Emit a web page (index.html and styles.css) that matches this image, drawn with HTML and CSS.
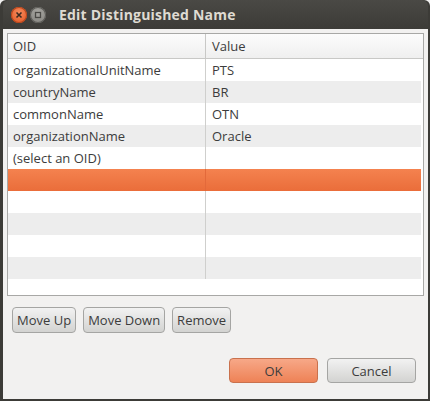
FILE: index.html
```html
<!DOCTYPE html>
<html lang="en">

<head>
    <meta charset="UTF-8">
    <meta name="viewport" content="width=device-width, initial-scale=1.0">
    <title>Edit Distinguished Name</title>
    <link rel="stylesheet" href="styles.css">
</head>

<body>
    <div class="window">
        <!-- Titelbalk -->
        <div class="titlebar">
            <span class="win-btn close" aria-label="Close">
                <svg width="8" height="8" viewBox="0 0 8 8">
                    <path d="M1.5 1.5 L6.5 6.5 M6.5 1.5 L1.5 6.5" stroke="#3c2a20" stroke-width="1.6" />
                </svg>
            </span>
            <span class="win-btn minimize" aria-label="Minimize">
                <svg width="8" height="8" viewBox="0 0 8 8">
                    <rect x="1.5" y="1.5" width="5" height="5" fill="none" stroke="#4a4945" stroke-width="1.3" />
                </svg>
            </span>
            <span class="title">Edit Distinguished Name</span>
        </div>

        <div class="content">
            <!-- Tabel met OID's -->
            <div class="table">
                <div class="row header">
                    <div class="cell">OID</div>
                    <div class="cell">Value</div>
                </div>
                <div class="row">
                    <div class="cell">organizationalUnitName</div>
                    <div class="cell">PTS</div>
                </div>
                <div class="row odd">
                    <div class="cell">countryName</div>
                    <div class="cell">BR</div>
                </div>
                <div class="row">
                    <div class="cell">commonName</div>
                    <div class="cell">OTN</div>
                </div>
                <div class="row odd">
                    <div class="cell">organizationName</div>
                    <div class="cell">Oracle</div>
                </div>
                <div class="row">
                    <div class="cell">(select an OID)</div>
                    <div class="cell"></div>
                </div>
                <div class="row selected">
                    <div class="cell"></div>
                    <div class="cell"></div>
                </div>
                <div class="row">
                    <div class="cell"></div>
                    <div class="cell"></div>
                </div>
                <div class="row odd">
                    <div class="cell"></div>
                    <div class="cell"></div>
                </div>
                <div class="row">
                    <div class="cell"></div>
                    <div class="cell"></div>
                </div>
                <div class="row odd">
                    <div class="cell"></div>
                    <div class="cell"></div>
                </div>
                <div class="filler"></div>
            </div>

            <div class="row-buttons">
                <button class="button">Move Up</button>
                <button class="button">Move Down</button>
                <button class="button">Remove</button>
            </div>

            <div class="dialog-buttons">
                <button class="button wide default">OK</button>
                <button class="button wide">Cancel</button>
            </div>
        </div>
    </div>
</body>

</html>
```

FILE: styles.css
```css
html,
body {
    margin: 0;
    padding: 0;
    background: #f2f1f0;
}

body {
    font-family: "Open Sans", sans-serif;
    font-size: 13px;
    color: #3c3c3c;
}

.window {
    width: 430px;
    height: 401px;
    box-sizing: border-box;
    display: flex;
    flex-direction: column;
    background: #3c3b37;
    border-radius: 6px 6px 0 0;
    padding: 0 2px 2px 3px;
}

/* Titelbalk */
.titlebar {
    height: 29px;
    flex: none;
    display: flex;
    align-items: center;
    padding-left: 8px;
    background: linear-gradient(#4a4945, #3c3b37);
    border-radius: 6px 6px 0 0;
}

.win-btn {
    width: 16px;
    height: 16px;
    border-radius: 50%;
    display: flex;
    align-items: center;
    justify-content: center;
    margin-right: 3px;
}

.close {
    background: radial-gradient(circle at 50% 35%, #f58a5c, #e0531f);
    box-shadow: inset 0 0 0 1px #b8461c;
}

.minimize {
    background: radial-gradient(circle at 50% 35%, #a9a8a3, #7e7d78);
    box-shadow: inset 0 0 0 1px #5c5b57;
}

.title {
    margin-left: 10px;
    font-weight: bold;
    font-size: 14px;
    color: #dfdbd2;
    letter-spacing: 0.2px;
}

.content {
    flex: 1;
    display: flex;
    flex-direction: column;
    background: #f2f1f0;
    padding: 4px 4px 0 4px;
}

/* Tabel */
.table {
    height: 263px;
    box-sizing: border-box;
    border: 1px solid #a8a8a6;
    background: #fff;
    display: flex;
    flex-direction: column;
}

.row {
    display: flex;
    height: 22px;
    flex: none;
    margin-right: 2px;
}

.row.odd {
    background: #ededed;
}

.row.selected {
    background: linear-gradient(#f4824f, #ea6d3a);
}

.cell {
    line-height: 22px;
    padding-left: 5px;
    box-sizing: border-box;
    white-space: nowrap;
}

.cell:first-child {
    width: 198px;
    border-right: 1px solid #cfcfcd;
}

.cell:last-child {
    padding-left: 6px;
    flex: 1;
}

.row.selected .cell:first-child {
    border-right-color: #e3693a;
}

.row.header {
    height: 25px;
    margin-right: 0;
    background: linear-gradient(#fcfcfc, #efefef);
    border-bottom: 1px solid #c8c8c6;
    box-sizing: border-box;
}

.row.header .cell {
    line-height: 24px;
    border-right-color: #c8c8c6;
}

.filler {
    flex: 1;
}

/* Knoppen */
.button {
    font-family: inherit;
    font-size: 13px;
    color: #3c3c3c;
    height: 26px;
    padding: 0 4px;
    border: 1px solid #a5a5a3;
    border-radius: 4px;
    background: linear-gradient(#f2f2f2, #d3d3d1);
    cursor: pointer;
}

.row-buttons {
    display: flex;
    gap: 7px;
    margin: 11px 0 0 5px;
}

.dialog-buttons {
    display: flex;
    justify-content: flex-end;
    gap: 9px;
    margin: 25px 8px 0 0;
}

.button.wide {
    width: 89px;
    height: 25px;
}

.button.default {
    background: linear-gradient(#f7a888, #ee8256);
    border-color: #c9714d;
}
```
